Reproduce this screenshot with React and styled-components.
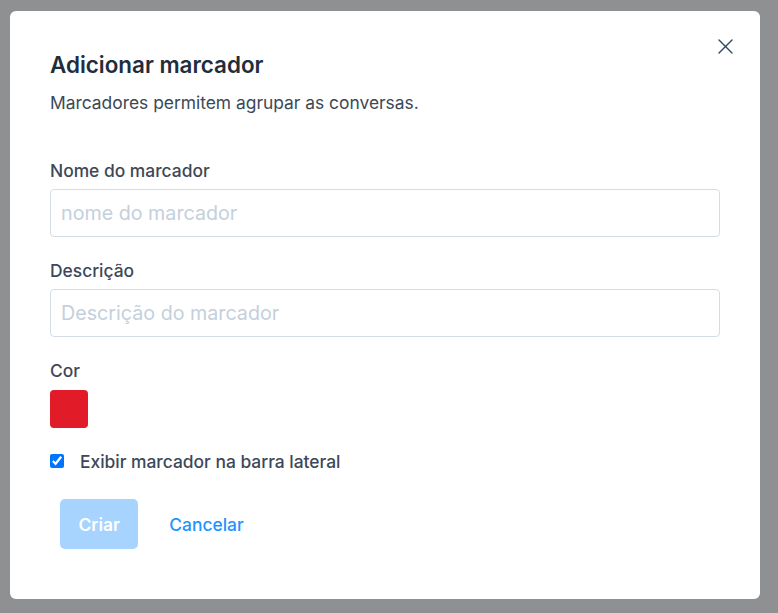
import React from "react";
import styled, { createGlobalStyle } from "styled-components";

const Global = createGlobalStyle`
  html, body { margin: 0; padding: 0; }
  body {
    background: #8f9092;
    font-family: Inter, "Noto Sans", sans-serif;
    -webkit-font-smoothing: antialiased;
  }
  * { box-sizing: border-box; }
`;

const Backdrop = styled.div`
  min-height: 613px;
  padding: 11px 18px 14px 10px;
`;

const Modal = styled.div`
  position: relative;
  width: 750px;
  height: 588px;
  background: #fff;
  border-radius: 6px;
  padding: 39px 40px 50px;
  display: flex;
  flex-direction: column;
`;

const Close = styled.button`
  position: absolute;
  top: 21px;
  right: 21px;
  width: 28px;
  height: 28px;
  border: 0;
  background: transparent;
  padding: 0;
  display: flex;
  align-items: center;
  justify-content: center;
  cursor: pointer;
`;

const Title = styled.h2`
  margin: 0;
  font-size: 22.4px;
  line-height: 30px;
  font-weight: 600;
  color: #1f2d3d;
`;

const Subtitle = styled.p`
  margin: 11px 0 0;
  font-size: 17.4px;
  line-height: 24px;
  color: #3c4858;
`;

const Form = styled.form`
  margin-top: 44px;
  display: flex;
  flex-direction: column;
`;

const Label = styled.label`
  display: block;
  font-size: 17.4px;
  line-height: 24px;
  font-weight: 500;
  color: #3c4858;
  margin-bottom: ${(p) => p.$gap || 6}px;
`;

const Input = styled.input`
  width: 100%;
  height: 48px;
  border: 1px solid #d4dde6;
  border-radius: 4px;
  padding: 0 10px;
  font-family: inherit;
  font-size: 19.7px;
  color: #1f2d3d;
  margin-bottom: 22px;
  outline: none;
  &::placeholder { color: #c4d0dc; }
`;

const Swatch = styled.div`
  width: 38px;
  height: 38px;
  border-radius: 4px;
  background: ${(p) => p.$color};
`;

const CheckRow = styled.label`
  margin-top: 21px;
  display: flex;
  align-items: center;
  height: 24px;
  font-size: 17.4px;
  font-weight: 500;
  color: #3c4858;
`;

const Check = styled.input`
  width: 14px;
  height: 14px;
  margin: 0 16px 0 0;
  accent-color: #0075ff;
`;

const Actions = styled.div`
  margin-top: 26px;
  padding-left: 10px;
  display: flex;
  align-items: center;
  gap: 15px;
`;

const Primary = styled.button`
  height: 50px;
  padding: 0 18.5px;
  border: 0;
  border-radius: 5px;
  background: #a6d4ff;
  color: #fff;
  font-family: inherit;
  font-size: 17.4px;
  font-weight: 600;
`;

const Link = styled.button`
  height: 50px;
  padding: 0 16px;
  border: 0;
  background: transparent;
  color: #1f93ff;
  font-family: inherit;
  font-size: 17.4px;
  font-weight: 500;
`;

export default function App() {
  return (
    <Backdrop>
      <Global />
      <Modal>
        <Close aria-label="Fechar">
          <svg width="15" height="15" viewBox="0 0 15 15" fill="none">
            <path d="M1 1L14 14M14 1L1 14" stroke="#2b4566" strokeWidth="1.4" strokeLinecap="round" />
          </svg>
        </Close>
        <Title>Adicionar marcador</Title>
        <Subtitle>Marcadores permitem agrupar as conversas.</Subtitle>
        <Form onSubmit={(e) => e.preventDefault()}>
          <Label>Nome do marcador</Label>
          <Input placeholder="nome do marcador" />
          <Label>Descrição</Label>
          <Input placeholder="Descrição do marcador" />
          <Label $gap={7}>Cor</Label>
          <Swatch $color="#e11b27" />
          <CheckRow>
            <Check type="checkbox" defaultChecked />
            Exibir marcador na barra lateral
          </CheckRow>
          <Actions>
            <Primary type="button" disabled>Criar</Primary>
            <Link type="button">Cancelar</Link>
          </Actions>
        </Form>
      </Modal>
    </Backdrop>
  );
}
